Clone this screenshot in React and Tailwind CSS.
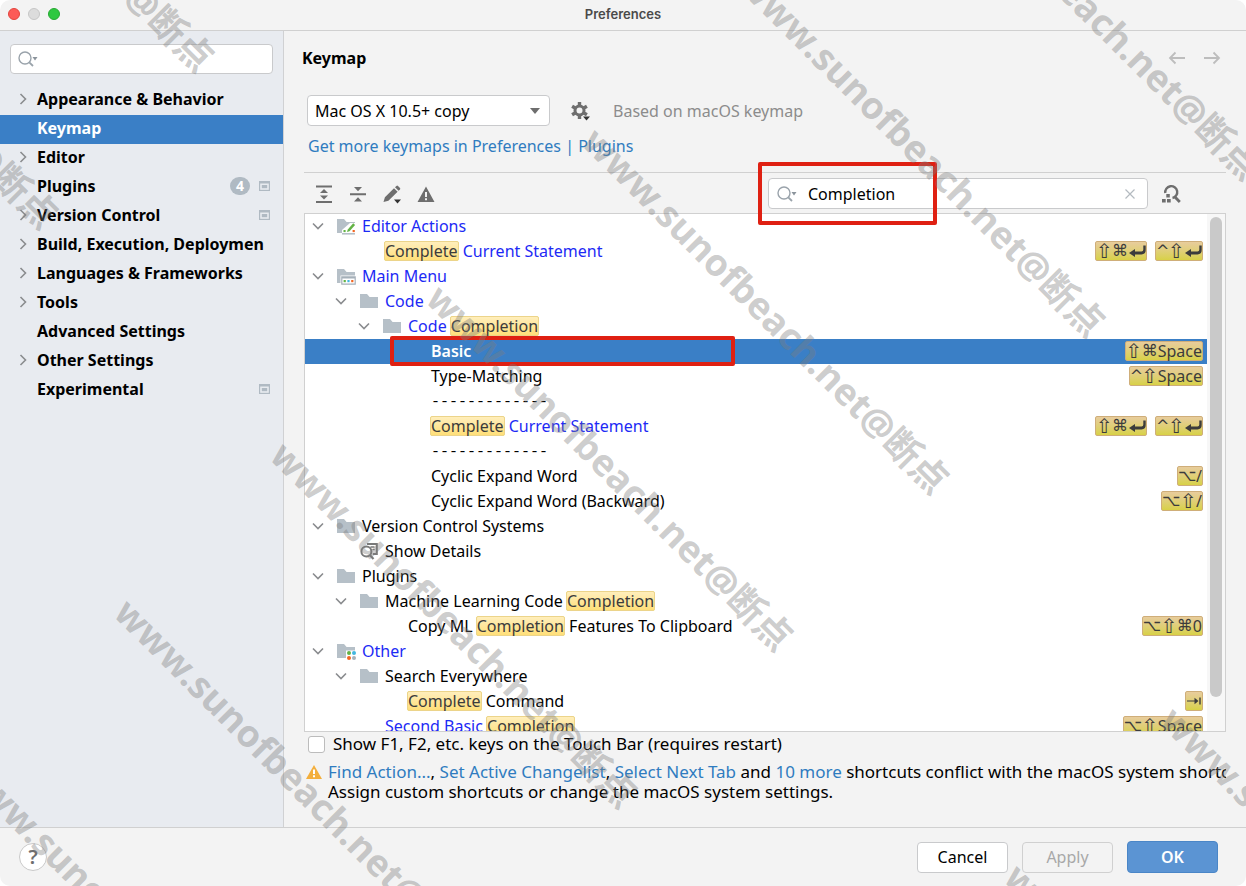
import { useState } from 'react';

const SECTIONS = [
  { label: 'Appearance & Behavior', open: true },
  { label: 'Keymap', selected: true },
  { label: 'Editor', open: true },
  { label: 'Plugins', count: 4, project: true },
  { label: 'Version Control', open: true, project: true },
  { label: 'Build, Execution, Deploymen', open: true },
  { label: 'Languages & Frameworks', open: true },
  { label: 'Tools', open: true },
  { label: 'Advanced Settings' },
  { label: 'Other Settings', open: true },
  { label: 'Experimental', project: true },
];

// Text between asterisks is a search hit and gets highlighted.
const ROWS = [
  { level: 0, group: true, icon: 'editor', text: 'Editor Actions', blue: true },
  { level: 1, text: '*Complete* Current Statement', blue: true, keys: ['⇧⌘↵', '^⇧↵'] },
  { level: 0, group: true, icon: 'menu', text: 'Main Menu', blue: true },
  { level: 1, group: true, icon: 'folder', text: 'Code', blue: true },
  { level: 2, group: true, icon: 'folder', text: 'Code *Completion*', blue: true },
  { level: 3, text: 'Basic', selected: true, keys: ['⇧⌘Space'] },
  { level: 3, text: 'Type-Matching', keys: ['^⇧Space'] },
  { level: 3, text: '-------------', separator: true },
  { level: 3, text: '*Complete* Current Statement', blue: true, keys: ['⇧⌘↵', '^⇧↵'] },
  { level: 3, text: '-------------', separator: true },
  { level: 3, text: 'Cyclic Expand Word', keys: ['⌥/'] },
  { level: 3, text: 'Cyclic Expand Word (Backward)', keys: ['⌥⇧/'] },
  { level: 0, group: true, icon: 'folder', text: 'Version Control Systems' },
  { level: 1, icon: 'details', text: 'Show Details' },
  { level: 0, group: true, icon: 'folder', text: 'Plugins' },
  { level: 1, group: true, icon: 'folder', text: 'Machine Learning Code *Completion*' },
  { level: 2, text: 'Copy ML *Completion* Features To Clipboard', keys: ['⌥⇧⌘0'] },
  { level: 0, group: true, icon: 'other', text: 'Other', blue: true },
  { level: 1, group: true, icon: 'folder', text: 'Search Everywhere' },
  { level: 2, text: '*Complete* Command', keys: ['⇥'] },
  { level: 1, text: 'Second Basic *Completion*', blue: true, keys: ['⌥⇧Space'] },
];

const INDENT = ['pl-[7px]', 'pl-[30px]', 'pl-[53px]', 'pl-[76px]'];

const Chevron = ({ down }) => (
  <svg viewBox="0 0 12 12" className="size-3 shrink-0" fill="none" stroke="#8a8c8f" strokeWidth="1.6">
    <path d={down ? 'M1 3.5 6 8.5 11 3.5' : 'M3.5 1 8.5 6 3.5 11'} />
  </svg>
);

const SearchIcon = () => (
  <svg viewBox="0 0 22 18" className="h-[18px] w-[22px] shrink-0" fill="none" stroke="#9aa3ab" strokeWidth="1.4">
    <circle cx="7" cy="8" r="6" />
    <path d="M11.3 12.3 15 16" strokeWidth="1.8" />
    <path d="M14.500 7h5l-2.500 3.4z" fill="#8b949c" stroke="none" />
  </svg>
);

const ProjectIcon = () => (
  <svg viewBox="0 0 11 10" className="h-[10px] w-[11px] shrink-0">
    <rect width="11" height="10" fill="#b0bac3" />
    <rect x="1.2" y="2.5" width="8.6" height="6.3" fill="#e8ebf0" />
    <rect x="2.8" y="4" width="5.4" height="3.2" fill="#b0bac3" />
  </svg>
);

const RowIcon = ({ name }) => {
  if (name === 'details') {
    return (
      <svg viewBox="0 0 18 18" className="size-[18px] shrink-0" fill="none" stroke="#7a7a7a">
        <path d="M7 1.9h9.8v10.2h-4" strokeWidth="2" />
        <path d="M10.5 5h4M12.5 7.6h2.2" strokeWidth="1.4" />
        <circle cx="6.4" cy="9.4" r="5" strokeWidth="2" />
        <path d="M9.8 13 13.5 17" strokeWidth="2.2" />
      </svg>
    );
  }
  return (
    <svg viewBox="0 0 19 18" className="h-[18px] w-[19px] shrink-0">
      <path d="M0 2h7l2.6 3H18v11H0z" fill="#b6c0c8" />
      {name === 'editor' && (
        <>
          <path d="M5 13 13 6h6v12H5z" fill="#fff" />
          <path d="M5 16h13v1.6H5z" fill="#b6c0c8" />
          <path d="m10 15 .8-2.600 5.400-6.200 1.900 1.700-5.600 6.300z" fill="#63b345" />
          <rect x="6.500" y="13" width="2.1" height="2.1" fill="#63b345" />
          <rect x="15.6" y="13" width="2.2" height="2.1" fill="#f26522" />
        </>
      )}
      {name === 'menu' && (
        <>
          <path d="M3.5 8.5H19V18H3.5z" fill="#fff" />
          <path d="M4.2 9.2h14.6v8.6H4.2zM5.4 11.6v5h12.200v-5z" fill="#a5b0b9" fillRule="evenodd" />
          <rect x="6.6" y="13" width="2.2" height="2.2" fill="#63b345" />
          <rect x="10.4" y="13" width="2.2" height="2.2" fill="#40b6e0" />
          <rect x="14.2" y="13" width="2.2" height="2.2" fill="#f26522" />
        </>
      )}
      {name === 'other' && (
        <>
          <path d="M9 8.5h10V18H9z" fill="#fff" />
          <circle cx="12" cy="11" r="2" fill="#63b345" />
          <circle cx="17" cy="11" r="2" fill="#40b6e0" />
          <circle cx="12" cy="16" r="2" fill="#f26522" />
          <circle cx="17" cy="16" r="2" fill="#a5b0b9" />
        </>
      )}
    </svg>
  );
};

const Key = ({ char }) => {
  if (char === '↵') {
    return (
      <svg viewBox="0 0 18 16" className="h-4 w-[18px]" aria-label="Enter">
        <path d="M1 10 7 6v2.600h6.500q1.800 0 1.800-1.800V2.500H17.700V7q0 4.400-4.200 4.400H7V14z" fill="#3c3c3c" />
      </svg>
    );
  }
  if (char === '⇥') {
    return (
      <svg viewBox="0 0 16 16" className="h-4 w-4" aria-label="Tab">
        <path d="M1 7.4h7.5V4.8L12.5 8l-4 3.2V8.6H1zM13.3 4.5h1.4v7h-1.4z" fill="#3c3c3c" />
      </svg>
    );
  }
  if (char === '^') {
    return <span className="w-3 text-center font-['DejaVu_Sans',sans-serif]">^</span>;
  }
  if (char === '⇧') {
    return <span className="flex w-4 justify-center font-['DejaVu_Sans',sans-serif] text-xl leading-5">⇧</span>;
  }
  if (char === '⌥') {
    return <span className="w-[18px] font-['DejaVu_Sans',sans-serif]">⌥</span>;
  }
  return <span className="w-4 text-center font-['DejaVu_Sans',sans-serif]">{char}</span>;
};

const Shortcut = ({ keys }) => {
  const mods = keys.match(/^[⇧⌘⌥^↵⇥]+/)[0];
  return (
    <kbd className="flex h-5 items-center rounded-xs border border-[#cfae79] bg-linear-to-b from-[#e8cc9c] to-[#d8d145] font-['Noto_Sans',sans-serif] text-base leading-5 font-normal text-[#3c3c3c]">
      {[...mods].map((char, i) => <Key key={i} char={char} />)}
      {keys.slice(mods.length)}
    </kbd>
  );
};

const Label = ({ text }) =>
  text.split('*').map((part, i) =>
    i % 2 ? (
      <mark key={i} className="-ml-px inline-block h-5 rounded-xs border border-[#ecd48a] bg-linear-to-b from-[#ffeebb] to-[#ffdf78] leading-[18px] text-[#3c3c3c]">
        {part}
      </mark>
    ) : (
      part
    )
  );

const TreeRow = ({ row }) => {
  const tone = row.selected ? 'bg-[#3a7fc6] font-semibold text-white' : row.blue ? 'text-[#1d2af5]' : 'text-black';
  return (
    <li className={`relative flex h-[25px] shrink-0 items-center pr-1 pb-0.5 ${INDENT[row.level]} ${tone}`}>
      <span className="flex w-[25px] shrink-0">{row.group && <Chevron down />}</span>
      <span className="flex w-[25px] shrink-0">{row.icon && <RowIcon name={row.icon} />}</span>
      <span className={`flex-1 whitespace-pre ${row.separator ? "pt-1 font-['Liberation_Mono',monospace] text-[15px]" : ''}`}>
        <Label text={row.text} />
      </span>
      <span className="flex gap-2">
        {row.keys?.map((keys) => <Shortcut key={keys} keys={keys} />)}
      </span>
      {row.selected && <span className="absolute -top-[3px] left-[85px] h-[30px] w-[345px] rounded-xs border-4 border-[#df2012]" />}
    </li>
  );
};

const Sidebar = () => (
  <aside className="flex w-[284px] shrink-0 flex-col border-r border-[#d0d1d3] bg-[#e8ebf0] pt-[13px]">
    <label className="mx-[10px] flex h-[30px] items-center rounded-sm border border-[#c9cacc] bg-white px-[7px]">
      <SearchIcon />
      <input type="text" aria-label="Search settings" className="w-full outline-none" />
    </label>
    <ul className="mt-3">
      {SECTIONS.map((item) => (
        <li
          key={item.label}
          className={`flex h-[29px] items-center pr-[13px] pb-[3px] pl-[17px] font-bold ${item.selected ? 'bg-[#3a7fc6] text-white' : ''}`}
        >
          <span className="w-5 shrink-0">{item.open && <Chevron />}</span>
          <span className="flex-1 whitespace-nowrap">{item.label}</span>
          {item.count && (
            <span className="mr-[9px] flex h-[18px] w-5 items-center justify-center rounded-full bg-[#b0bac3] text-sm text-white">
              {item.count}
            </span>
          )}
          {item.project && <ProjectIcon />}
        </li>
      ))}
    </ul>
  </aside>
);

const ToolButton = ({ label, children }) => (
  <button type="button" aria-label={label} className="flex size-5 items-center justify-center">
    <svg viewBox="0 0 20 20" className="size-5" fill="#6e6e6e">{children}</svg>
  </button>
);

const Toolbar = ({ query, setQuery }) => (
  <div className="flex h-[41px] shrink-0 items-center border-t border-[#d0d0d0] pt-px pr-[45px] pl-[10px]">
    <div className="flex gap-[14px]">
      <ToolButton label="Expand all">
        <path d="M2 1.5h16v2H2zM2 17h16v2H2zM10 5l4 4H6zM10 15.5l4-4H6z" />
      </ToolButton>
      <ToolButton label="Collapse all">
        <path d="M2 9.2h16v2H2zM10 7.2l4-4.2H6zM10 13.2l4 4.2H6z" />
      </ToolButton>
      <ToolButton label="Edit shortcut">
        <path d="m1.5 18 1.4-4.8L12 4.3l3.6 3.5-9.2 8.9zM13 3.3l1.4-1.4q.8-.6 1.6 0l2 2q.6.8 0 1.5l-1.4 1.4z" />
        <path d="M12 15.5h7l-3.5 4z" fill="#333" />
      </ToolButton>
      <ToolButton label="Show conflicts">
        <path d="M10 2.5 18.5 18h-17zM9 8v5h2V8zM9 14.3v2h2v-2z" fillRule="evenodd" />
      </ToolButton>
    </div>
    <div className="relative ml-auto flex h-[31px] w-[380px] items-center rounded-sm border border-[#c9cacc] bg-white px-2">
      <SearchIcon />
      <input
        type="text"
        aria-label="Search actions"
        value={query}
        onChange={(e) => setQuery(e.target.value)}
        className="ml-[9px] min-w-0 flex-1 outline-none"
      />
      <button type="button" aria-label="Clear" onClick={() => setQuery('')} className="mr-1">
        <svg viewBox="0 0 10 10" className="size-[10px]" stroke="#b4bac0" strokeWidth="1.2">
          <path d="m.5.5 9 9M9.5.5l-9 9" />
        </svg>
      </button>
      <span className="pointer-events-none absolute -top-[17px] -left-[11px] h-[63px] w-[179px] rounded-xs border-4 border-[#df2012]" />
    </div>
    <div className="ml-[13px] flex">
      <ToolButton label="Find by shortcut">
        <path d="M4.3 9a6 6 0 1 1 7.2 5" fill="none" stroke="#6e6e6e" strokeWidth="2.4" />
        <path d="m13.5 12.5 5.3 5.5" stroke="#6e6e6e" strokeWidth="2.8" />
        <path d="M5.3 10h3.5v3.5H5.3zM1 15h3.7v3.5H1zM6 15h3.7v3.5H6z" />
      </ToolButton>
    </div>
  </div>
);

const Link = ({ children }) => <a href="#" className="text-[#2f7cc0]">{children}</a>;

// The stamp repeats along diagonal bands; each entry is the left end of one copy.
const STAMPS = [
  ...[-3, -2, -1, 0, 1, 2, 3].map((i) => ({ left: 434 + i * 156, top: 291 - i * 157 })),
  ...[-1, 0].map((i) => ({ left: -145 + i * 156, top: -288 - i * 157 })),
  ...[0, 1].map((i) => ({ left: 1012 + i * 156, top: 870 - i * 157 })),
];

const Watermark = () => (
  <div aria-hidden="true" className="pointer-events-none absolute inset-0 overflow-hidden">
    {STAMPS.map((pos) => (
      <span
        key={`${pos.left}:${pos.top}`}
        style={pos}
        className="absolute h-0 origin-left rotate-45 font-['Noto_Sans','Noto_Sans_CJK_SC',sans-serif] text-[37px] leading-[0px] font-bold whitespace-nowrap text-[#7d7d7d]/40"
      >
        www.sunofbeach.net@断点
      </span>
    ))}
  </div>
);

export default function App() {
  const [query, setQuery] = useState('Completion');
  const [touchBar, setTouchBar] = useState(false);

  return (
    <div className="bg-white">
      <div className="relative flex h-screen flex-col overflow-hidden rounded-[10px] bg-[#f3f3f3] font-['Noto_Sans',sans-serif] text-base leading-5 text-black">
        <header className="flex h-[31px] shrink-0 items-center border-b border-[#d0d0d0] px-2 pb-[3px]">
          <div className="flex flex-1 gap-2">
            <button type="button" aria-label="Close" className="size-3 rounded-full border border-[#e2453d] bg-[#fc5b57]" />
            <button type="button" aria-label="Minimize" className="size-3 rounded-full border border-[#c6c6c6] bg-[#dcdcdc]" />
            <button type="button" aria-label="Zoom" className="size-3 rounded-full border border-[#27a832] bg-[#2ec840]" />
          </div>
          <h1 className="font-['Inter',sans-serif] text-[13px] font-semibold text-[#4a4a4a]">Preferences</h1>
          <div className="flex-1" />
        </header>

        <div className="flex min-h-0 flex-1">
          <Sidebar />
          <main className="flex min-w-0 flex-1 flex-col px-5 pt-[17px]">
            <div className="flex h-5 shrink-0 items-center justify-between pr-[5px]">
              <h2 className="-ml-0.5 font-bold">Keymap</h2>
              <div className="flex gap-[17px]">
                <button type="button" aria-label="Back">
                  <svg viewBox="0 0 18 14" className="h-[14px] w-[18px]" fill="none" stroke="#bdbdbd" strokeWidth="1.8">
                    <path d="M17 7H2M7.5 1.5 2 7l5.500 5.500" />
                  </svg>
                </button>
                <button type="button" aria-label="Forward">
                  <svg viewBox="0 0 18 14" className="h-[14px] w-[18px]" fill="none" stroke="#bdbdbd" strokeWidth="1.8">
                    <path d="M1 7h15M10.500 1.500 16 7l-5.500 5.500" />
                  </svg>
                </button>
              </div>
            </div>

            <div className="mt-[27px] flex shrink-0 items-center pl-[3px]">
              <div className="relative">
                <select aria-label="Keymap" className="block h-[31px] w-[243px] appearance-none rounded-sm border border-[#c9cacc] bg-white px-[7px] outline-none">
                  <option>Mac OS X 10.5+ copy</option>
                </select>
                <svg viewBox="0 0 10 6" className="pointer-events-none absolute top-[13px] right-[10px] h-[6px] w-[10px]" fill="#6e6e6e">
                  <path d="M0 0h10L5 6z" />
                </svg>
              </div>
              <button type="button" aria-label="Keymap actions" className="ml-5 flex">
                <svg viewBox="0 0 20 20" className="size-5" fill="none">
                  <circle cx="9.500" cy="9.500" r="4.500" stroke="#6e6e6e" strokeWidth="3" />
                  <path
                    d="M9.500 1v3.500M9.500 14.500V18M2.100 5.200l3 1.800M13.900 12l3 1.800M2.100 13.800l3-1.800M13.900 7l3-1.800"
                    stroke="#6e6e6e"
                    strokeWidth="3.4"
                  />
                  <path d="M13 15.500h7l-3.500 4z" fill="#333" />
                </svg>
              </button>
              <span className="ml-[23px] text-[#8c8c8c]">Based on macOS keymap</span>
            </div>

            <p className="mt-[10px] mb-4 shrink-0 pl-1">
              <Link>Get more keymaps in Preferences | Plugins</Link>
            </p>

            <Toolbar query={query} setQuery={setQuery} />

            <div className="flex min-h-0 flex-1 overflow-hidden border border-[#d0d0d0] bg-white">
              <ul className="flex min-w-0 flex-1 flex-col">
                {ROWS.map((row, i) => <TreeRow key={i} row={row} />)}
              </ul>
              <div className="w-[18px] bg-[#f7f7f7] px-[3px] pt-[3px]">
                <div className="h-[480px] rounded-full bg-[#c9c9c9]" />
              </div>
            </div>

            <label className="mt-px flex h-[22px] shrink-0 items-center gap-2 pl-1 text-[17px]">
              <input
                type="checkbox"
                checked={touchBar}
                onChange={(e) => setTouchBar(e.target.checked)}
                className="size-[17px] appearance-none rounded-[3px] border border-[#bcbcbc] bg-white checked:bg-[#3a7fc6]"
              />
              Show F1, F2, etc. keys on the Touch Bar (requires restart)
            </label>

            <div className="mt-[7px] mb-[25px] flex shrink-0 gap-[6px] overflow-hidden pl-0.5 text-[17px]">
              <svg viewBox="0 0 16 16" className="mt-0.5 size-4 shrink-0">
                <path d="M8 1 16 15H0z" fill="#f3af3d" />
                <path d="M7 5.500h2v4.500H7zM7 11.300h2v2H7z" fill="#fff" />
              </svg>
              <p className="whitespace-nowrap">
                <Link>Find Action...</Link>, <Link>Set Active Changelist</Link>, <Link>Select Next Tab</Link> and{' '}
                <Link>10 more</Link> shortcuts conflict with the macOS system shortcuts.
                <br />
                Assign custom shortcuts or change the macOS system settings.
              </p>
            </div>
          </main>
        </div>

        <footer className="flex h-[59px] shrink-0 items-center gap-[14px] border-t border-[#d0d0d0] pr-7 pl-[19px]">
          <button type="button" aria-label="Help" className="mr-auto size-7 rounded-full border border-[#c9c9c9] bg-white text-xl leading-6 font-semibold text-[#6e6e6e]">
            ?
          </button>
          <button type="button" className="h-[31px] w-[91px] rounded-sm border border-[#c9cacc] bg-white">Cancel</button>
          <button type="button" disabled className="h-[31px] w-[91px] rounded-sm border border-[#d0d0d0] text-[#a8a8a8]">Apply</button>
          <button type="button" className="h-8 w-[91px] rounded-sm border border-[#4a86c7] bg-[#5b94d3] font-semibold text-white">OK</button>
        </footer>

        <Watermark />
      </div>
    </div>
  );
}
